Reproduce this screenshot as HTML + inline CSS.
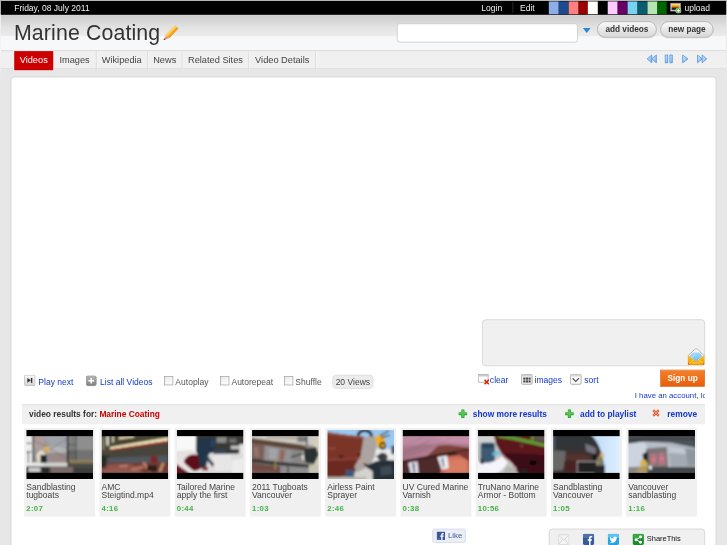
<!DOCTYPE html>
<html lang="en">
<head>
<meta charset="utf-8">
<title>Marine Coating</title>
<style>
html,body{margin:0;padding:0;}
body{width:727px;height:545px;overflow:hidden;background:#e7e7e7;position:relative;}
#stage{position:absolute;left:0;top:0;width:1024px;height:768px;transform:scale(0.70996,0.70964);transform-origin:0 0;font-family:"Liberation Sans",Arial,sans-serif;font-size:12px;color:#333;overflow:hidden;background:#e7e7e7;}
.abs{position:absolute;}
a{text-decoration:none;color:#1238cc;}
a.rb{color:#1236d6;}
#topbar{left:0;top:0;width:1024px;height:20.5px;background:#000;}
#topbar span{position:absolute;top:3.5px;color:#f0f0f0;font-size:12px;line-height:14px;white-space:nowrap;}
.sw{position:absolute;top:1.8px;height:18.2px;width:13.9px;}
#header{left:0;top:20.5px;width:1024px;height:50.5px;background:linear-gradient(#dadada 0,#cecece 1.5px,#d3d3d3 6px,#e2e2e2 17px,#ececec 30px,#f7f8fa 30.5px,#f7f8fa 100%);}
#title{left:19.6px;top:29px;font-size:30px;line-height:36px;color:#333;white-space:nowrap;letter-spacing:.2px;}
#search{left:559px;top:32.5px;width:255px;height:27.5px;background:#fff;border:1px solid #c4c4c4;border-radius:4px;box-sizing:border-box;}
.btn{position:absolute;top:30px;height:23px;box-sizing:border-box;border:1px solid #aaa;border-radius:12px;background:linear-gradient(#f8f8f8,#d8d8d8);font-weight:bold;font-size:11.6px;line-height:20px;text-align:center;color:#333;box-shadow:0 1px 1px rgba(0,0,0,.15);}
#tabbar{left:0;top:71px;width:1024px;height:26px;background:#f0f0f0;border-top:1px solid #d6d6d6;border-bottom:1px solid #dedede;box-sizing:border-box;}
.tab{position:absolute;top:72px;height:27.5px;font-size:13px;line-height:26.6px;color:#444;white-space:nowrap;border-right:1px solid #d4d4d4;box-shadow:1px 0 0 #fafafa;box-sizing:border-box;text-align:center;}
.tab.on{background:#cc0000;color:#fff;border-right:none;height:27.2px;box-shadow:0 0 0 1px #f2f6f6;}
#panel{left:15px;top:107.6px;width:994.4px;height:680px;background:#fff;border:1px solid #cdcdcd;box-sizing:border-box;border-radius:5px 5px 0 0;}
#textarea{left:679px;top:450px;width:314px;height:65.5px;box-sizing:border-box;background:#f0f0f0;border:1px solid #cfcfcf;border-radius:5px;}
.ctl{position:absolute;font-size:12px;line-height:14px;white-space:nowrap;}
span.ctl{color:#555;}
.cb{position:absolute;width:11px;height:11px;border:1px solid #a0a0a0;background:linear-gradient(135deg,#e8e8ee,#fff);box-sizing:content-box;}
#views{left:468px;top:528px;width:58px;height:20px;box-sizing:border-box;border:1px solid #dcdcdc;border-radius:6px;background:#ececec;font-size:12px;line-height:18px;text-align:center;color:#444;}
#signup{left:930px;top:521px;width:63px;height:24px;box-sizing:border-box;border:1px solid #d85a0a;background:linear-gradient(#f58028,#e85e0c);color:#fff;font-weight:bold;font-size:11.6px;line-height:22px;text-align:center;}
#resbar{left:31px;top:570px;width:962px;height:28px;background:#f0f0f0;border-top:1px solid #d8d8d8;box-sizing:border-box;}
.rb{position:absolute;top:576.5px;font-size:11.8px;line-height:14px;font-weight:bold;white-space:nowrap;}
.card{position:absolute;top:603px;width:100px;height:125px;background:#f0f0f0;}
.card .th{position:absolute;left:3px;top:3px;width:94px;height:69px;overflow:hidden;}
.card .th svg{display:block;}
.card .tt{position:absolute;left:3px;top:77px;width:102px;font-size:12px;line-height:12px;color:#444;}
.card .tm{position:absolute;left:3px;top:106px;font-size:11px;line-height:14px;color:#44b444;letter-spacing:.4px;font-weight:bold;}
#like{left:609px;top:745px;width:47px;height:20px;box-sizing:border-box;border:1px solid #cad4e7;border-radius:3px;background:#eceef5;}
#share{left:773px;top:745px;width:220px;height:40px;box-sizing:border-box;border:1px solid #ccc;border-radius:5px;background:#f0f0f0;}
</style>
</head>
<body>
<div id="stage">
<svg class="abs" width="0" height="0"><defs><filter id="bl" x="-10%" y="-10%" width="120%" height="120%"><feGaussianBlur stdDeviation="1.2"/></filter></defs></svg>
<div id="topbar" class="abs">
  <span style="left:20px">Friday, 08 July 2011</span>
  <span style="left:678px">Login</span>
  <span style="left:732.5px">Edit</span>
  <i class="abs" style="left:721.5px;top:3px;width:1px;height:15px;background:#3a3a3a"></i>
  <i class="sw" style="left:773.00px;background:#8eaeea"></i>
  <i class="sw" style="left:786.87px;background:#1c4c8c"></i>
  <i class="sw" style="left:800.74px;background:#ff8080"></i>
  <i class="sw" style="left:814.61px;background:#990000"></i>
  <i class="sw" style="left:828.48px;background:#ffffff"></i>
  <i class="sw" style="left:856.22px;background:#ffccff"></i>
  <i class="sw" style="left:870.09px;background:#660066"></i>
  <i class="sw" style="left:883.96px;background:#77d4f0"></i>
  <i class="sw" style="left:897.83px;background:#0c5c70"></i>
  <i class="sw" style="left:911.70px;background:#b4e4b4"></i>
  <i class="sw" style="left:925.57px;background:#006600"></i>
  <svg class="abs" style="left:944px;top:3px" width="16" height="16" viewBox="0 0 16 16">
<defs><linearGradient id="gup" x1="0" y1="0" x2="0" y2="1"><stop offset="0" stop-color="#f8e040"/><stop offset=".35" stop-color="#f0a020"/><stop offset=".6" stop-color="#a03010"/><stop offset=".75" stop-color="#202020"/><stop offset="1" stop-color="#303030"/></linearGradient></defs>
<rect x="0.5" y="1.5" width="14" height="11" fill="#d8d8d8" stroke="#9a9a9a"/>
<rect x="2" y="3" width="11" height="8" fill="url(#gup)"/>
<circle cx="11.5" cy="12" r="3.8" fill="#3aa83a" stroke="#e8f8e8" stroke-width=".8"/>
<path d="M11.5 9.8V14.2M9.3 12H13.7" stroke="#fff" stroke-width="1.5"/>
</svg>
  <span style="left:964px">upload</span>
</div>
<div id="header" class="abs"></div>
<div id="title" class="abs">Marine Coating</div>
<svg class="abs" style="left:230px;top:35px" width="22" height="22" viewBox="0 0 22 22">
<polygon points="16.5,0.8 21.2,5.2 8.5,18.5 3.2,13.8" fill="#fcc040"/>
<polygon points="19.2,3.2 21.4,5.2 8.6,18.6 6.4,16.4" fill="#f4a020"/>
<polygon points="16.5,0.8 18.2,2.4 5,15.6 3.2,13.8" fill="#fdd468"/>
<polygon points="3.2,13.8 8.5,18.5 2.6,20.6 1.6,19.6" fill="#f08c68"/>
<polygon points="3.2,13.8 5.2,15.6 2.2,18.2 1.9,17.2" fill="#f8d8a8"/>
<polygon points="0.4,21.6 1.2,18.8 3.2,20.6" fill="#403830"/>
</svg>
<div id="search" class="abs"></div>
<svg class="abs" style="left:821px;top:39px" width="11" height="8" viewBox="0 0 11 8"><path d="M0 0.5H11L5.5 7.5Z" fill="#2a8ad8"/></svg>
<div class="btn" style="left:841px;width:84px">add videos</div>
<div class="btn" style="left:930px;width:75px">new page</div>
<div id="tabbar" class="abs"></div>
<div class="tab on" style="left:20px;width:55px">Videos</div>
<div class="tab" style="left:75px;width:61px">Images</div>
<div class="tab" style="left:136px;width:72px">Wikipedia</div>
<div class="tab" style="left:208px;width:49px">News</div>
<div class="tab" style="left:257px;width:94px">Related Sites</div>
<div class="tab" style="left:351px;width:94px">Video Details</div>
<svg class="abs" width="0" height="0"><defs><linearGradient id="gbl" x1="0" y1="0" x2="1" y2="1"><stop offset="0" stop-color="#d8ecff"/><stop offset="1" stop-color="#78b0f0"/></linearGradient></defs></svg><svg class="abs" style="left:910px;top:75px" width="16" height="16" viewBox="0 0 16 16"><path d="M8 2.5V13.5L1.5 8Z" fill="url(#gbl)" stroke="#4a8ad8" stroke-width="1" stroke-linejoin="round"/><path d="M14.5 2.5V13.5L8 8Z" fill="url(#gbl)" stroke="#4a8ad8" stroke-width="1" stroke-linejoin="round"/></svg><svg class="abs" style="left:934px;top:75px" width="16" height="16" viewBox="0 0 16 16"><rect x="3" y="2.5" width="3.5" height="11" fill="url(#gbl)" stroke="#4a8ad8" stroke-width="1" stroke-linejoin="round"/><rect x="9.5" y="2.5" width="3.5" height="11" fill="url(#gbl)" stroke="#4a8ad8" stroke-width="1" stroke-linejoin="round"/></svg><svg class="abs" style="left:957px;top:75px" width="16" height="16" viewBox="0 0 16 16"><path d="M4.5 2.5V13.5L12 8Z" fill="url(#gbl)" stroke="#4a8ad8" stroke-width="1" stroke-linejoin="round"/></svg><svg class="abs" style="left:981px;top:75px" width="16" height="16" viewBox="0 0 16 16"><path d="M1.5 2.5V13.5L8 8Z" fill="url(#gbl)" stroke="#4a8ad8" stroke-width="1" stroke-linejoin="round"/><path d="M8 2.5V13.5L14.5 8Z" fill="url(#gbl)" stroke="#4a8ad8" stroke-width="1" stroke-linejoin="round"/></svg>
<div id="panel" class="abs"></div>
<div id="textarea" class="abs"></div>
<svg class="abs" style="left:968px;top:490px" width="25" height="25" viewBox="0 0 25 25">
<defs><linearGradient id="gen" x1="0" y1="0" x2="0" y2="1"><stop offset="0" stop-color="#fcc020"/><stop offset="1" stop-color="#f09800"/></linearGradient>
<linearGradient id="gbp" x1="0" y1="0" x2="0" y2="1"><stop offset="0" stop-color="#b8dcfc"/><stop offset="1" stop-color="#60c0f4"/></linearGradient></defs>
<path d="M1 11.5L10.3 2.4Q12.5 0.4 14.700 2.400L24 11.500L12.500 20Z" fill="#fff" stroke="#b4b4b4" stroke-width="1.300"/>
<polygon points="3.2,11.5 12.5,3.6 21.8,11.5 12.5,19.5" fill="url(#gbp)"/>
<polygon points="9.5,5.6 12.5,3.2 15.5,5.6 14,7.4 12.5,6.2 11,7.4" fill="#f4f8ff"/>
<polygon points="5,12 11,7 14,10 8,15" fill="#a8d8fc" opacity=".7"/>
<polygon points="0.8,10.5 12.5,19.5 24.2,10.5 24.2,24.2 0.8,24.2" fill="url(#gen)"/>
<path d="M1.5 23.5L9.5 16.8M23.5 23.5L15.5 16.8" stroke="#fde060" stroke-width="1.3" fill="none"/>
<path d="M6.5 21.5H18.5" stroke="#fdd850" stroke-width="1.2"/>
<circle cx="2.2" cy="23" r="1" fill="#d84810"/><circle cx="22.8" cy="23" r="1" fill="#d84810"/>
</svg>
<svg class="abs" style="left:34px;top:528px" width="16" height="16" viewBox="0 0 16 16">
<defs><linearGradient id="gpn" x1="0" y1="0" x2="0" y2="1"><stop offset="0" stop-color="#fafafa"/><stop offset="1" stop-color="#d4d4d4"/></linearGradient></defs>
<rect x="0.5" y="0.5" width="15" height="15" rx="2" fill="url(#gpn)" stroke="#b0b0b0"/>
<path d="M4.5 4.5V11.5L9.5 8Z" fill="#333"/><rect x="9.5" y="4.5" width="2" height="7" fill="#333"/>
</svg>
<svg class="abs" style="left:121px;top:529px" width="16" height="16" viewBox="0 0 16 16">
<defs><linearGradient id="gla" x1="0" y1="0" x2="0" y2="1"><stop offset="0" stop-color="#b8b8b8"/><stop offset="1" stop-color="#808080"/></linearGradient></defs>
<rect x="0.5" y="0.5" width="14" height="14" rx="2.5" fill="url(#gla)" stroke="#8a8a8a"/>
<path d="M7.5 3.5V11.5M3.5 7.5H11.5" stroke="#fff" stroke-width="2.2"/>
</svg>
<svg class="abs" style="left:673px;top:527px" width="18" height="16" viewBox="0 0 18 16">
<rect x="0.5" y="0.5" width="14" height="11" fill="#fff" stroke="#9a9a9a"/>
<rect x="1" y="1" width="13" height="2.5" fill="#c8c8c8"/>
<path d="M9.5 8L15.5 14.5M15.5 8L9.5 14.5" stroke="#dd2200" stroke-width="2.2"/>
</svg>
<svg class="abs" style="left:734px;top:527px" width="17" height="16" viewBox="0 0 17 16">
<rect x="0.5" y="0.5" width="15" height="14" rx="1.5" fill="#f4f4f4" stroke="#909090"/>
<rect x="1" y="1" width="14" height="2.5" fill="#d0d0d0"/>
<g fill="#444"><rect x="3" y="5" width="3" height="3"/><rect x="6.7" y="5" width="3" height="3"/><rect x="10.4" y="5" width="3" height="3"/><rect x="3" y="9" width="3" height="3"/><rect x="6.7" y="9" width="3" height="3"/><rect x="10.4" y="9" width="3" height="3"/></g>
</svg>
<svg class="abs" style="left:803px;top:527px" width="17" height="16" viewBox="0 0 17 16">
<rect x="0.5" y="0.5" width="15" height="14" rx="1.5" fill="#fafafa" stroke="#909090"/>
<rect x="1" y="1" width="14" height="2.5" fill="#d8d8d8"/>
<path d="M3.5 6L8 10.5L12.5 6" fill="none" stroke="#555" stroke-width="1.6"/>
</svg>

<a class="ctl" style="left:54px;top:531px">Play next</a>
<a class="ctl" style="left:141px;top:531px">List all Videos</a>
<i class="cb" style="left:231px;top:530px"></i><span class="ctl" style="left:247px;top:531px">Autoplay</span>
<i class="cb" style="left:310px;top:530px"></i><span class="ctl" style="left:326px;top:531px">Autorepeat</span>
<i class="cb" style="left:400px;top:530px"></i><span class="ctl" style="left:416px;top:531px">Shuffle</span>
<div id="views" class="abs">20 Views</div>
<a class="ctl" style="left:690px;top:529px">clear</a>
<a class="ctl" style="left:753px;top:529px">images</a>
<a class="ctl" style="left:823px;top:529px">sort</a>
<div id="signup" class="abs">Sign up</div>
<a class="ctl" style="left:894px;top:550px;width:99px;overflow:hidden;font-size:11px">I have an account, log in</a>

<div id="resbar" class="abs"></div>
<svg class="abs" style="left:646px;top:576.5px" width="12" height="12" viewBox="0 0 12 12"><path d="M6 0.8V11.2M0.8 6H11.2" stroke="#2e9e2e" stroke-width="4.4" stroke-linecap="round"/><path d="M6 1.4V9.6M1.4 5.4H10.6" stroke="#56c856" stroke-width="2.6" stroke-linecap="round"/></svg>
<svg class="abs" style="left:796px;top:576.5px" width="12" height="12" viewBox="0 0 12 12"><path d="M6 0.8V11.2M0.8 6H11.2" stroke="#2e9e2e" stroke-width="4.4" stroke-linecap="round"/><path d="M6 1.4V9.6M1.4 5.4H10.6" stroke="#56c856" stroke-width="2.6" stroke-linecap="round"/></svg>
<svg class="abs" style="left:918px;top:576px" width="12" height="12" viewBox="0 0 12 12"><path d="M2 2L10 10M10 2L2 10" stroke="#e8603c" stroke-width="3.2"/><path d="M2.5 2.5L9.5 9.5M9.5 2.5L2.5 9.5" stroke="#f49474" stroke-width="1.2"/></svg>
<span class="rb" style="left:41px;color:#333">video results for: <b style="color:#cc0000">Marine Coating</b></span>
<a class="rb" style="left:666px">show more results</a>
<a class="rb" style="left:817px">add to playlist</a>
<a class="rb" style="left:940px">remove</a>

<div class="card" style="left:34px"><div class="th"><svg width="94" height="69" viewBox="0 0 94 69"><defs><clipPath id="c1"><rect x="-2" y="8.5" width="98" height="52"/></clipPath></defs><g clip-path="url(#c1)"><g filter="url(#bl)">
<rect x="-5" y="0" width="104" height="69" fill="#929292"/>
<rect x="-5" y="5" width="64" height="42" fill="#9a9a9a"/>
<polygon points="10,8 26,8 22,28 10,26" fill="#b09c9a"/>
<polygon points="24,8 58,8 58,24 36,26" fill="#a0a4aa"/>
<polygon points="22,26 40,22 56,26 56,34 30,34" fill="#b4b4b4"/>
<polygon points="30,32 57,32 57,46 30,46" fill="#988888"/>
<rect x="60" y="5" width="40" height="26" fill="#8e8e8e"/>
<rect x="60" y="28" width="40" height="18" fill="#727272"/>
<rect x="-5" y="5" width="14" height="41" fill="#eeeeee"/>
<rect x="-2" y="18" width="9" height="1.6" fill="#444"/>
<rect x="-2" y="30" width="9" height="1.6" fill="#555"/>
<rect x="2" y="30" width="1.6" height="16" fill="#555"/>
<rect x="8.5" y="5" width="2.2" height="60" fill="#3c3c3c"/>
<rect x="57.2" y="5" width="3" height="60" fill="#262626"/>
<rect x="68.5" y="5" width="2" height="38" fill="#444"/>
<rect x="64" y="5" width="1.5" height="38" fill="#505050"/>
<rect x="60" y="20" width="10" height="1.3" fill="#555"/>
<rect x="60" y="32" width="10" height="1.3" fill="#555"/>
<line x1="10" y1="14" x2="58" y2="40" stroke="#6e6e6e" stroke-width="1"/>
<line x1="10" y1="42" x2="58" y2="12" stroke="#6e6e6e" stroke-width="1"/>
<rect x="-5" y="50" width="104" height="16" fill="#3e3e3e"/>
<rect x="-5" y="46" width="63" height="5.5" fill="#d4d4d2"/>
<rect x="-5" y="46" width="30" height="4" fill="#ececec"/>
<rect x="60" y="43" width="40" height="4.5" fill="#7c6a42"/>
<rect x="60" y="43" width="40" height="1.4" fill="#a89868"/>
<rect x="60" y="47.500" width="40" height="6" fill="#4a4a4a"/>
<rect x="3" y="53" width="17" height="6" fill="#d0d0d0"/>
<rect x="34" y="52" width="32" height="9" fill="#7c6a68"/>
<rect x="22" y="52" width="10" height="9" fill="#2c2c2c"/>
<ellipse cx="21" cy="38" rx="6.500" ry="9" fill="#e8e0c6"/>
<rect x="20" y="35" width="9" height="11.500" fill="#1a2232"/>
<ellipse cx="29" cy="26.500" rx="4.200" ry="3.200" fill="#e2b240"/>
<ellipse cx="28" cy="30" rx="2.200" ry="2" fill="#caa070"/>
</g></g><rect x="-2" y="-2" width="98" height="10.6" fill="#000"/><rect x="-2" y="60.4" width="98" height="10.6" fill="#000"/></svg></div><div class="tt">Sandblasting tugboats</div><div class="tm">2:07</div></div>
<div class="card" style="left:140px"><div class="th"><svg width="94" height="69" viewBox="0 0 94 69"><defs><clipPath id="c2"><rect x="-2" y="8.5" width="98" height="52"/></clipPath></defs><g clip-path="url(#c2)"><g filter="url(#bl)">
<rect x="-5" y="0" width="104" height="69" fill="#3a382e"/>
<rect x="-5" y="5" width="20" height="30" fill="#4c4838"/>
<rect x="7" y="8" width="3" height="14" fill="#f0f0e8"/>
<rect x="15" y="8" width="2.500" height="10" fill="#d8d0b8"/>
<rect x="1" y="10" width="3" height="18" fill="#8a8468"/>
<polygon points="20,12 60,8 94,8 94,10 14,22" fill="#4a4436"/>
<polygon points="24,10 46,8 46,10.500 24,13.500" fill="#e8dcb0"/>
<polygon points="12,24 94,10 94,15 12,27.500" fill="#f0e4b8"/>
<polygon points="12,27.500 94,15 94,18 12,29.500" fill="#a82828"/>
<polygon points="12,29.500 94,18 94,37 12,39" fill="#46443a"/>
<polygon points="8,39 94,36 94,46 8,47" fill="#505860"/>
<rect x="69" y="37" width="10" height="10" fill="#7c2624"/>
<rect x="-5" y="46" width="104" height="20" fill="#6e3c34"/>
<polygon points="0,49 40,47 50,52 10,56" fill="#8e524a"/>
<polygon points="0,55 50,54 60,61 0,61" fill="#965850"/>
<polygon points="57,46 61,45 70,58 66,60" fill="#c08068"/>
<polygon points="85,46 89,46 84,59 80,59" fill="#c09070"/>
<polygon points="40,54 58,50 60,54 44,58" fill="#b07060"/>
<polygon points="24,50 36,49 38,52 26,53" fill="#b87868"/>
<rect x="64" y="50" width="14" height="8" fill="#2c1c18"/>
<rect x="-5" y="36" width="12" height="16" fill="#2c2a26"/>
</g></g><rect x="-2" y="-2" width="98" height="10.6" fill="#000"/><rect x="-2" y="60.4" width="98" height="10.6" fill="#000"/></svg></div><div class="tt">AMC Steigtind.mp4</div><div class="tm">4:16</div></div>
<div class="card" style="left:246px"><div class="th"><svg width="94" height="69" viewBox="0 0 94 69"><defs><clipPath id="c3"><rect x="-2" y="8.5" width="98" height="52"/></clipPath></defs><g clip-path="url(#c3)"><g filter="url(#bl)">
<rect x="-5" y="0" width="104" height="69" fill="#d8d8d8"/>
<rect x="-5" y="5" width="34" height="28" fill="#f8f8f8"/>
<rect x="27" y="5" width="72" height="27" fill="#383836"/>
<rect x="52" y="30" width="36" height="5" fill="#2e3436"/>
<rect x="56" y="10" width="14" height="8" fill="#8a8a88"/>
<rect x="74" y="12" width="10" height="6" fill="#707070"/>
<rect x="76" y="22" width="12" height="5" fill="#c0c0c0"/>
<rect x="88" y="20" width="10" height="30" fill="#e4e4e4"/>
<polygon points="40,34 94,33 94,64 40,64" fill="#dcdcdc"/>
<polygon points="50,36 76,35 78,56 54,58" fill="#e6e6e6"/>
<polygon points="52,28 70,28 70,33 52,33" fill="#34485e"/>
<polygon points="78,42 94,40 94,64 78,64" fill="#ececec"/>
<polygon points="-5,30 20,28 40,36 44,64 -5,64" fill="#e6e0e0"/>
<ellipse cx="24" cy="46" rx="14" ry="11.500" fill="#5e1018"/>
<polygon points="-5,42 6,45 20,60 26,64 -5,64" fill="#6a141c"/>
<polygon points="-5,34 2,34 12,48 30,63 21,63 -5,45" fill="#e8e2e2"/>
<polygon points="27,20 34,12 50,11 55,19 51,30 45,34 41,54 33,54 30,38 27,28" fill="#20344a"/>
<polygon points="42,34 52,48 49,50 40,40" fill="#2a4058"/>
<ellipse cx="51" cy="18" rx="4.500" ry="5.500" fill="#2a425a"/>
<rect x="36" y="52" width="8" height="5" fill="#8a3038"/>
<rect x="49" y="46" width="3" height="5" fill="#6a2a30"/>
</g></g><rect x="-2" y="-2" width="98" height="10.6" fill="#000"/><rect x="-2" y="60.4" width="98" height="10.6" fill="#000"/></svg></div><div class="tt">Tailored Marine apply the first</div><div class="tm">0:44</div></div>
<div class="card" style="left:352px"><div class="th"><svg width="94" height="69" viewBox="0 0 94 69"><defs><clipPath id="c4"><rect x="-2" y="8.5" width="98" height="52"/></clipPath></defs><g clip-path="url(#c4)"><g filter="url(#bl)">
<rect x="-5" y="0" width="104" height="69" fill="#8c8a88"/>
<polygon points="-5,5 99,5 99,24 60,19 -5,11" fill="#cccac4"/>
<polygon points="20,8 70,9 70,14 20,11" fill="#b8a898"/>
<polygon points="-5,11 70,21 82,27 82,30.500 -5,18" fill="#5e4436"/>
<rect x="87" y="8" width="14" height="56" fill="#d4ceb8"/>
<rect x="64" y="8" width="12" height="9" fill="#7a7a78"/>
<rect x="76" y="8" width="2" height="14" fill="#444"/>
<polygon points="-5,18 18,21 16,43 -5,42" fill="#7c6058"/>
<polygon points="2,24 8,24 10,38 4,38" fill="#94766e"/>
<polygon points="18,22 56,28 56,47 18,43" fill="#929294"/>
<polygon points="24,25 36,27 34,42 24,40" fill="#a4a4a8"/>
<polygon points="40,27 47,28 44,45 38,43" fill="#96685c"/>
<polygon points="56,28 70,30 70,48 56,47" fill="#888888"/>
<polygon points="70,28 90,24 94,34 88,47 76,46" fill="#2a3232"/>
<rect x="70.500" y="30" width="2.500" height="12" fill="#f0f0f0"/>
<polygon points="-5,40 30,44 80,49 80,53 30,49 -5,45" fill="#383632"/>
<polygon points="55,37 76,31 76,33 55,39" fill="#383836"/>
<polygon points="-5,46 40,51 40,64 -5,64" fill="#6e4c44"/>
<polygon points="40,51 80,53 80,64 40,64" fill="#8e8e90"/>
<polygon points="80,50 99,48 99,64 80,64" fill="#c8c4b4"/>
<rect x="32" y="42" width="1.600" height="14" fill="#a89448"/>
<rect x="50" y="51" width="1.500" height="12" fill="#333"/>
<polygon points="-5,56 34,58 34,64 -5,64" fill="#7a5454"/>
</g></g><rect x="-2" y="-2" width="98" height="10.6" fill="#000"/><rect x="-2" y="60.4" width="98" height="10.6" fill="#000"/></svg></div><div class="tt">2011 Tugboats Vancouver</div><div class="tm">1:03</div></div>
<div class="card" style="left:458px"><div class="th"><svg width="94" height="69" viewBox="0 0 94 69"><defs><clipPath id="c5"><rect x="-2" y="-2" width="98" height="73"/></clipPath></defs><g clip-path="url(#c5)"><g filter="url(#bl)">
<rect x="-5" y="-5" width="104" height="79" fill="#9cc8f0"/>
<rect x="62" y="27" width="33" height="24" fill="#ececec"/>
<rect x="90" y="22" width="10" height="12" fill="#505868"/>
<polygon points="36,50 75,50 75,74 36,74" fill="#d4d4cc"/>
<polygon points="-5,2 20,6 56,10 50,40 36,64 -5,68" fill="#7a3428"/>
<polygon points="-5,44 44,42 36,64 -5,68" fill="#6a2c24"/>
<polygon points="-5,2 20,6 56,10 55,13 20,9.500 -5,6" fill="#8e483c"/>
<polygon points="51,10 71,8 67,38 60,50 42,60 38,52 47,36" fill="#aca4a0"/>
<line x1="0" y1="26" x2="12" y2="26" stroke="#b06058" stroke-width="1"/>
<line x1="0" y1="42" x2="48" y2="40" stroke="#a85048" stroke-width="1"/>
<rect x="16" y="36" width="7" height="2.500" fill="#3a1410"/>
<rect x="42" y="34" width="5" height="2" fill="#3a1410"/>
<path d="M43 8 Q46 -1 55 1 Q62 2 62 9" fill="none" stroke="#222" stroke-width="4"/>
<polygon points="67,9 76,7 82,14 82,27 72,26 69,18" fill="#f0b020"/>
<ellipse cx="78" cy="22" rx="4.500" ry="5.500" fill="#222"/>
<ellipse cx="78" cy="22" rx="2.200" ry="3" fill="#f0b020"/>
<line x1="74" y1="8" x2="87" y2="1" stroke="#222" stroke-width="1.800"/>
<line x1="76" y1="11" x2="88" y2="7" stroke="#222" stroke-width="1.800"/>
<polygon points="48,45 58,49 68,44 80,42 99,43 99,74 64,74 64,58 56,53" fill="#262e38"/>
<polygon points="74,52 90,50 92,62 76,64" fill="#3e4852"/>
<ellipse cx="78" cy="38" rx="7" ry="6" fill="#3e4046"/>
<rect x="69" y="36" width="9" height="2.400" fill="#2e3036"/>
<ellipse cx="49.500" cy="46" rx="2.500" ry="2" fill="#d09880"/>
<rect x="26" y="56" width="12" height="10" fill="#3e5478"/>
<rect x="-5" y="66" width="60" height="6" fill="#b8b8b0"/>
</g></g></svg></div><div class="tt">Airless Paint Sprayer</div><div class="tm">2:46</div></div>
<div class="card" style="left:564px"><div class="th"><svg width="94" height="69" viewBox="0 0 94 69"><defs><clipPath id="c6"><rect x="-2" y="8.5" width="98" height="52"/></clipPath></defs><g clip-path="url(#c6)"><g filter="url(#bl)">
<rect x="-5" y="0" width="104" height="69" fill="#b07c8e"/>
<polygon points="-5,5 99,5 99,16 -5,22" fill="#bc8aa0"/>
<polygon points="40,5 99,5 99,20 60,18" fill="#c48ea6"/>
<polygon points="-5,28 30,19 50,22 -5,44" fill="#a47486"/>
<polygon points="30,41 50,22 64,21 94,25 94,30 40,40" fill="#7a4238"/>
<polygon points="-5,45 94,28 94,64 -5,64" fill="#502a2a"/>
<polygon points="-5,43.500 94,26.500 94,29.500 -5,46.500" fill="#2a1414"/>
<polygon points="60,38 94,33 94,64 52,64 56,52" fill="#cc6c56"/>
<polygon points="64,42 90,40 92,60 60,62" fill="#d87c62"/>
<polygon points="74,31 94,28 94,44 84,38" fill="#7a3632"/>
<polygon points="49,38 63,36 65,54 55,56" fill="#eeeef6"/>
<polygon points="54,40 58,39 59,52 57,53" fill="#8a8a98"/>
<polygon points="8,46 21,44 23,64 12,64" fill="#e0e0ec"/>
<polygon points="13.500,47 17,46 18,63 16,63" fill="#6a6a7a"/>
<line x1="-5" y1="36" x2="40" y2="14" stroke="#98687c" stroke-width="0.800"/>
<line x1="-5" y1="26" x2="30" y2="9" stroke="#a07088" stroke-width="0.800"/>
<line x1="20" y1="36" x2="70" y2="10" stroke="#a8788e" stroke-width="0.800"/>
</g></g><rect x="-2" y="-2" width="98" height="10.6" fill="#000"/><rect x="-2" y="60.4" width="98" height="10.6" fill="#000"/></svg></div><div class="tt">UV Cured Marine Varnish</div><div class="tm">0:38</div></div>
<div class="card" style="left:670px"><div class="th"><svg width="94" height="69" viewBox="0 0 94 69"><defs><clipPath id="c7"><rect x="-2" y="8.5" width="98" height="52"/></clipPath></defs><g clip-path="url(#c7)"><g filter="url(#bl)">
<rect x="-5" y="0" width="104" height="69" fill="#c2c4c4"/>
<rect x="-5" y="5" width="30" height="12" fill="#d2d2d2"/>
<polygon points="22,5 99,5 99,64 58,64 50,48 34,34 26,20" fill="#5c141c"/>
<polygon points="38,32 99,36 99,62 58,60" fill="#3a0c12"/>
<polygon points="28,8 50,9 99,20 99,25 50,14 28,10.500" fill="#5c9e34"/>
<rect x="75" y="8" width="4" height="9" fill="#56962e"/>
<polygon points="80,8 99,8 99,18 80,14" fill="#625254"/>
<rect x="4" y="18" width="20" height="28" rx="3" fill="#3e5a74"/>
<rect x="6" y="19" width="16" height="6" fill="#28405a"/>
<path d="M-5 40 Q6 48 16 46 Q28 43 34 37 L42 45 Q37 58 22 63 L-5 66Z" fill="#f4f4fa"/>
<polygon points="20,32 30,30 31,34 21,36" fill="#58c0e0"/>
<ellipse cx="78" cy="46" rx="5" ry="3" fill="#050505"/>
<path d="M36 38 Q52 44 57 62" fill="none" stroke="#b03030" stroke-width="1"/>
<rect x="60" y="55" width="10" height="8" fill="#222"/>
<ellipse cx="62" cy="22" rx="3" ry="2.500" fill="#6a3c3e"/>
<rect x="38" y="52" width="16" height="10" fill="#b4b4b0"/>
<ellipse cx="6" cy="44" rx="3" ry="4" fill="#3a3a40"/>
</g></g><rect x="-2" y="-2" width="98" height="10.6" fill="#000"/><rect x="-2" y="60.4" width="98" height="10.6" fill="#000"/></svg></div><div class="tt">TruNano Marine Armor - Bottom</div><div class="tm">10:56</div></div>
<div class="card" style="left:776px"><div class="th"><svg width="94" height="69" viewBox="0 0 94 69"><defs><clipPath id="c8"><rect x="-2" y="8.5" width="98" height="52"/></clipPath></defs><g clip-path="url(#c8)"><g filter="url(#bl)">
<defs><linearGradient id="sky8" x1="0" y1="0" x2="1" y2="0"><stop offset=".5" stop-color="#b8d8f8"/><stop offset="1" stop-color="#e2f0ff"/></linearGradient></defs>
<rect x="-5" y="0" width="104" height="69" fill="url(#sky8)"/>
<path d="M-5 0 L46 0 Q63 14 69 34 Q73 50 73 66 L-5 66Z" fill="#3e3230"/>
<path d="M-5 0 L46 0 Q59 10 65 24 L-5 30Z" fill="#303438"/>
<rect x="-5" y="6" width="8" height="22" fill="#4e5a68"/>
<polygon points="-5,28 18,30 16,56 -5,58" fill="#686866"/>
<polygon points="20,34 50,36 50,44 18,42" fill="#58302e"/>
<polygon points="16,44 34,44 32,60 14,60" fill="#482224"/>
<polygon points="45,19 60,25 60,34 47,30" fill="#74767e"/>
<rect x="56" y="34" width="7" height="10" fill="#121518"/>
<polygon points="62,38 70,36 71,52 62,54" fill="#847c5c"/>
<ellipse cx="69" cy="35.500" rx="3" ry="3" fill="#dcb468"/>
<rect x="34" y="44" width="28" height="17" fill="none" stroke="#c8c8c8" stroke-width="1.100"/>
<rect x="35" y="45" width="25" height="15" fill="#242424"/>
<polygon points="60,50 73,50 73,64 58,64" fill="#26282c"/>
</g></g><rect x="-2" y="-2" width="98" height="10.6" fill="#000"/><rect x="-2" y="60.4" width="98" height="10.6" fill="#000"/></svg></div><div class="tt">Sandblasting Vancouver</div><div class="tm">1:05</div></div>
<div class="card" style="left:882px"><div class="th"><svg width="94" height="69" viewBox="0 0 94 69"><defs><clipPath id="c9"><rect x="-2" y="8.5" width="98" height="52"/></clipPath></defs><g clip-path="url(#c9)"><g filter="url(#bl)">
<rect x="-5" y="0" width="104" height="69" fill="#b6bec8"/>
<polygon points="-5,5 99,5 99,26 60,18 20,16 -5,20" fill="#4e5256"/>
<polygon points="-5,12 40,10 99,12 99,14 40,14 -5,18" fill="#3e4246"/>
<polygon points="-5,20 22,17 30,28 20,50 -5,54" fill="#ccd4e0"/>
<polygon points="56,20 99,27 99,52 60,52" fill="#a4aab4"/><polygon points="56,22 99,29 99,36 58,32" fill="#c0c8d2"/>
<polygon points="80,26 99,28 99,50 84,50" fill="#9096a0"/>
<polygon points="25,26 54,24 56,52 27,52" fill="#7c7474"/>
<polygon points="31,34 51,32 52,49 32,49" fill="#b87480"/>
<polygon points="40,31 43,31 42,49 39,49" fill="#867078"/>
<ellipse cx="36" cy="42" rx="3.500" ry="2.500" fill="#d47c8a"/>
<ellipse cx="47" cy="40" rx="3.500" ry="2.500" fill="#d47c8a"/>
<polygon points="-5,54 30,52 99,52 99,64 -5,64" fill="#42464a"/>
<polygon points="-5,52 14,52 14,64 -5,64" fill="#8a8a84"/>
<polygon points="20,34 27,30 28,46 22,48" fill="#1c1c20"/>
<ellipse cx="21.5" cy="46.5" rx="4.800" ry="5" fill="#d8b44c"/>
<polygon points="13,52 27,50 27,64 13,64" fill="#b09a60"/>
<ellipse cx="31" cy="53" rx="2.500" ry="3" fill="#e8e8e8"/>
<ellipse cx="90" cy="12" rx="2" ry="1.200" fill="#15181c"/>
</g></g><rect x="-2" y="-2" width="98" height="10.6" fill="#000"/><rect x="-2" y="60.4" width="98" height="10.6" fill="#000"/></svg></div><div class="tt">Vancouver sandblasting</div><div class="tm">1:16</div></div>

<div id="like" class="abs"></div>
<svg class="abs" style="left:615px;top:749px" width="12" height="12" viewBox="0 0 12 12">
<rect width="12" height="12" rx="1" fill="#3b5998"/>
<path d="M8.3 12V7.4H9.8L10 5.6H8.3V4.6C8.3 4.1 8.5 3.8 9.1 3.8H10V2.2C9.8 2.2 9.3 2.1 8.7 2.1C7.4 2.1 6.5 2.9 6.5 4.3V5.6H5.1V7.4H6.5V12Z" fill="#fff"/>
<rect x="1.5" y="10.2" width="3" height="1" fill="#8a9cc4"/>
</svg>
<span class="abs" style="left:631px;top:748px;font-size:11px;line-height:13px;color:#3b5998">Like</span>
<div id="share" class="abs"></div>
<svg class="abs" style="left:786px;top:752px" width="16" height="16" viewBox="0 0 16 16">
<rect x="0.5" y="1.5" width="15" height="14" rx="1.5" fill="#f4f4f4" stroke="#d0d0d0"/>
<path d="M1.5 3L8 9L14.5 3M1.5 15L6 8M14.5 15L10 8" fill="none" stroke="#d4d4d4" stroke-width="1.2"/>
</svg>
<svg class="abs" style="left:821px;top:752px" width="16" height="16" viewBox="0 0 16 16">
<rect width="16" height="16" rx="2.5" fill="#3b5998"/><rect width="16" height="6" rx="2.5" fill="#5470a8"/>
<path d="M10.8 16V10H12.6L12.9 7.8H10.8V6.4C10.8 5.8 11 5.4 11.8 5.4H13V3.4C12.8 3.4 12.1 3.3 11.4 3.3C9.7 3.3 8.6 4.3 8.6 6.2V7.8H6.8V10H8.6V16Z" fill="#fff"/>
</svg>
<svg class="abs" style="left:856px;top:752px" width="16" height="16" viewBox="0 0 16 16">
<rect width="16" height="16" rx="2.5" fill="#2aa4e0"/><rect width="16" height="6" rx="2.5" fill="#5cc0f0"/>
<path d="M13.5 5.2c-.4.2-.8.3-1.3.4.5-.3.8-.7 1-1.200-.4.300-.9.400-1.400.500a2.200 2.200 0 0 0-3.800 2c-1.800-.1-3.500-1-4.600-2.300-.6 1-.3 2.300.7 3-.4 0-.7-.1-1-.3 0 1.100.8 2 1.800 2.200-.3.100-.7.100-1 0 .3.900 1.100 1.500 2.100 1.600-1 .7-2.100 1-3.300.9 1 .700 2.200 1 3.400 1 4.100 0 6.400-3.400 6.400-6.400v-.3c.400-.3.800-.7 1-1.100z" fill="#fff"/>
</svg>
<svg class="abs" style="left:891px;top:752px" width="16" height="16" viewBox="0 0 16 16">
<rect width="16" height="16" rx="2.5" fill="#1f8a2c"/><rect width="16" height="6" rx="2.5" fill="#38a844"/>
<path d="M5 8.500L11 5M5 8.500L11 12" stroke="#fff" stroke-width="1.400" fill="none"/>
<circle cx="4.800" cy="8.500" r="2.100" fill="#fff"/><circle cx="11.200" cy="4.800" r="2.100" fill="#fff"/><circle cx="11.200" cy="12" r="2.100" fill="#fff"/>
</svg>
<span class="abs" style="left:911px;top:753px;font-size:10.5px;line-height:13px;color:#111">ShareThis</span>
</div>
<div class="abs" style="left:0;top:0;width:727px;height:1px;background:#b4b4b4"></div>
<div class="abs" style="left:0;top:0;width:1px;height:77px;background:linear-gradient(#b0b0b0 0,#b0b0b0 14px,#ececec 15px,#f4f4f4 50px,#eeeeee 68px,rgba(238,238,238,0) 77px)"></div>
<div class="abs" style="left:726px;top:0;width:1px;height:77px;background:linear-gradient(#b0b0b0 0,#b0b0b0 14px,#e8e8e8 15px,#ececec 68px,rgba(236,236,236,0) 77px)"></div>
</body>
</html>
